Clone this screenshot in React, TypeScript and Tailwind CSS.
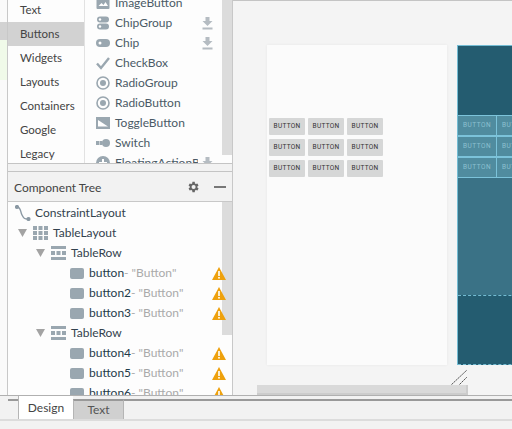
const uiFont = "font-['Lato','Noto_Sans',sans-serif]"

const categories = ['Text', 'Buttons', 'Widgets', 'Layouts', 'Containers', 'Google', 'Legacy']

function Download() {
    return (
        <svg width="11" height="13" viewBox="0 0 11 13" fill="#b5bcc2">
            <path d="M3.500 0h4v4h3l-5 5-5-5h3z" />
            <rect x="0.5" y="10.5" width="10" height="2" />
        </svg>
    )
}

function PaletteIcon({ name }: { name: string }) {
    const c = '#9aa7b0'
    if (name === 'ImageButton') return (
        <svg width="14" height="14" viewBox="0 0 14 14">
            <rect x="0.5" y="1" width="13" height="12" rx="1" fill={c} />
            <path d="M2.500 10l3-3 2 2 2-3 2.500 4z" fill="#fff" />
        </svg>
    )
    if (name === 'ChipGroup') return (
        <svg width="14" height="14" viewBox="0 0 14 14" fill={c}>
            <rect x="1" y="0.5" width="12" height="6" rx="3" />
            <rect x="1" y="7.5" width="12" height="6" rx="3" />
            <circle cx="4" cy="3.5" r="1.2" fill="#fff" />
            <circle cx="4" cy="10.5" r="1.2" fill="#fff" />
        </svg>
    )
    if (name === 'Chip') return (
        <svg width="14" height="14" viewBox="0 0 14 14" fill={c}>
            <rect x="0" y="3" width="14" height="8" rx="4" />
            <circle cx="4" cy="7" r="1.5" fill="#fff" />
        </svg>
    )
    if (name === 'CheckBox') return (
        <svg width="14" height="14" viewBox="0 0 14 14" fill="none" stroke={c} strokeWidth="2.4">
            <path d="M1 7.500l4 4.500 8-10" />
        </svg>
    )
    if (name === 'RadioGroup' || name === 'RadioButton') return (
        <svg width="14" height="14" viewBox="0 0 14 14">
            <circle cx="7" cy="7" r="6" fill="none" stroke={c} strokeWidth="1.6" />
            <circle cx="7" cy="7" r="3" fill={c} />
        </svg>
    )
    if (name === 'ToggleButton') return (
        <svg width="14" height="12" viewBox="0 0 14 12">
            <rect width="14" height="12" fill={c} />
            <path d="M2 3l10 6.500H2z" fill="#fff" />
        </svg>
    )
    if (name === 'Switch') return (
        <svg width="14" height="10" viewBox="0 0 14 10" fill={c}>
            <rect x="0" y="3" width="3" height="4" />
            <rect x="3.5" y="3" width="3" height="4" />
            <circle cx="10" cy="5" r="4" />
        </svg>
    )
    return (
        <svg width="14" height="14" viewBox="0 0 14 14">
            <circle cx="7" cy="7" r="7" fill={c} />
            <path d="M6 3h2v3h3v2H8v3H6V8H3V6h3z" fill="#fff" />
        </svg>
    )
}

const paletteItems = [
    { name: 'ImageButton', dl: false },
    { name: 'ChipGroup', dl: true },
    { name: 'Chip', dl: true },
    { name: 'CheckBox', dl: false },
    { name: 'RadioGroup', dl: false },
    { name: 'RadioButton', dl: false },
    { name: 'ToggleButton', dl: false },
    { name: 'Switch', dl: false },
    { name: 'FloatingActionB', dl: true },
]

function Arrow() {
    return (
        <svg width="9" height="8" viewBox="0 0 9 8" fill="#a3a3a3">
            <path d="M0 0h9L4.500 8z" />
        </svg>
    )
}

function TableLayoutIcon() {
    return (
        <svg width="15" height="14" viewBox="0 0 15 14" fill="#9aa7b0">
            {[0, 5, 10].map(y => [0, 5.5, 11].map(x => <rect key={`${x}-${y}`} x={x} y={y} width="4" height="4" />))}
        </svg>
    )
}

function TableRowIcon() {
    return (
        <svg width="15" height="14" viewBox="0 0 15 14" fill="#9aa7b0">
            <rect x="0" y="0" width="15" height="3" />
            <rect x="0" y="11" width="15" height="3" />
            <rect x="0" y="5" width="4" height="4" />
            <rect x="5.5" y="5" width="4" height="4" />
            <rect x="11" y="5" width="4" height="4" />
        </svg>
    )
}

function Warning() {
    return (
        <svg width="14" height="13" viewBox="0 0 14 13">
            <path d="M7 0l7 13H0z" fill="#eea10d" />
            <rect x="6.2" y="4" width="1.6" height="5" fill="#fff" />
            <rect x="6.2" y="10" width="1.6" height="1.6" fill="#fff" />
        </svg>
    )
}

function ButtonRow({ id }: { id: string }) {
    return (
        <div className="h-[20px] flex items-center pl-[62px] pr-[6px] shrink-0">
            <div className="w-[14px] h-[11px] rounded-[2px] bg-[#9aa7b0] mr-[5px]" />
            <span className="text-[#1f3b4a] text-[12px] leading-none">{id}</span>
            <span className="text-[#aaaaaa] text-[12px] leading-none whitespace-pre">- "Button"</span>
            <div className="ml-auto flex"><Warning /></div>
        </div>
    )
}

function TableRowNode() {
    return (
        <div className="h-[20px] flex items-center pl-[28px] shrink-0">
            <Arrow />
            <div className="ml-[6px] mr-[5px] flex"><TableRowIcon /></div>
            <span className="text-[#33424d] text-[12px] leading-none">TableRow</span>
        </div>
    )
}

function Palette() {
    return (
        <div className="h-[164px] flex bg-[#fdfdfd] border-b border-[#c4c4c4] overflow-hidden">
            <div className="w-[76px] shrink-0 flex flex-col -mt-[2px]">
                {categories.map(c => (
                    <div key={c} className={`h-[24px] shrink-0 flex items-center pl-[12px] text-[11.5px] text-[#444] ${c === 'Buttons' ? 'bg-[#d2d2d2]' : ''}`}>{c}</div>
                ))}
            </div>
            <div className="w-[1px] bg-[#e2e2e2] shrink-0" />
            <div className="flex-1 flex flex-col -mt-[7px] min-w-0 pr-[9px]">
                {paletteItems.map(item => (
                    <div key={item.name} className="h-[20px] shrink-0 flex items-center pl-[11px]">
                        <div className="w-[14px] flex justify-center mr-[5px]"><PaletteIcon name={item.name} /></div>
                        <span className={`text-[12px] text-[#4a5a66] leading-none whitespace-nowrap w-[84px] ${item.name === 'FloatingActionB' ? 'overflow-hidden' : ''}`}>{item.name}</span>
                        {item.dl && <div className="ml-[4px] flex"><Download /></div>}
                    </div>
                ))}
            </div>
            <div className="w-[10px] h-[155px] bg-[#dcdcdc] shrink-0" />
        </div>
    )
}

function ComponentTree() {
    return (
        <div className="flex-1 relative flex flex-col pt-[1px] min-h-0 bg-[#fdfdfd] overflow-hidden">
            <div className="absolute right-0 top-0 w-[10px] h-[133px] bg-[#dcdcdc]" />
            <div className="relative flex flex-col">
                <div className="h-[20px] flex items-center pl-[7px] shrink-0">
                    <svg width="16" height="16" viewBox="0 0 16 16" fill="none" stroke="#8a98a3" strokeWidth="1.4">
                        <path d="M2 2c4 0 3 4 5 8s3 4 6 4" />
                        <circle cx="2" cy="2" r="1.4" fill="#8a98a3" />
                        <circle cx="13.5" cy="14" r="1.4" fill="#8a98a3" />
                    </svg>
                    <span className="ml-[4px] text-[#33424d] text-[12px] leading-none">ConstraintLayout</span>
                </div>
                <div className="h-[20px] flex items-center pl-[10px] shrink-0">
                    <Arrow />
                    <div className="ml-[6px] mr-[5px] flex"><TableLayoutIcon /></div>
                    <span className="text-[#33424d] text-[12px] leading-none">TableLayout</span>
                </div>
                <TableRowNode />
                <ButtonRow id="button" />
                <ButtonRow id="button2" />
                <ButtonRow id="button3" />
                <TableRowNode />
                <ButtonRow id="button4" />
                <ButtonRow id="button5" />
                <ButtonRow id="button6" />
            </div>
        </div>
    )
}

function PreviewButton({ label }: { label: string }) {
    return (
        <div className="h-[17px] w-[36px] rounded-[1px] bg-[#d6d7d7] flex items-center justify-center text-[6.5px] text-[#333] font-['Roboto',sans-serif] tracking-[0.3px]">
            {label}
        </div>
    )
}

function BlueCell() {
    return (
        <div className="w-[39px] shrink-0 border-r border-[#7cc3da] flex items-center justify-center text-[6.5px] text-[#8cc0d0] font-['Roboto',sans-serif] tracking-[0.5px]">
            BUTTON
        </div>
    )
}

function Canvas() {
    return (
        <div className="flex-1 relative bg-[#f4f4f4] border-t border-[#c4c4c4] overflow-hidden min-w-0">
            <div className="flex pl-[34px] pt-[44px] gap-[10px] w-[400px]">
                <div className="w-[180px] h-[320px] shrink-0 bg-[#fbfbfb] shadow-[0_0_3px_rgba(0,0,0,0.06)] pt-[73px] pl-[2px] flex flex-col gap-[4px]">
                    {[0, 1, 2].map(r => (
                        <div key={r} className="flex gap-[3px]">
                            <PreviewButton label="BUTTON" />
                            <PreviewButton label="BUTTON" />
                            <PreviewButton label="BUTTON" />
                        </div>
                    ))}
                </div>
                <div className="w-[120px] h-[320px] shrink-0 flex flex-col border-l border-[#74bcd3]">
                    <div className="h-[70px] bg-[#245c70] border-t border-[#74bcd3]" />
                    <div className="h-[63px] bg-[#508c9f] flex flex-col">
                        {[0, 1, 2].map(r => (
                            <div key={r} className="h-[21px] flex border-y border-[#7cc3da]">
                                <BlueCell />
                                <BlueCell />
                            </div>
                        ))}
                    </div>
                    <div className="h-[117px] bg-[#3a7286]" />
                    <div className="h-[70px] bg-[#245c70] border-t border-b border-dashed border-[#74bcd3]" />
                </div>
            </div>
            <svg className="absolute left-[217px] top-[368px]" width="20" height="18" viewBox="0 0 20 18" fill="none" stroke="#555" strokeDasharray="2 0.6">
                <path d="M0 17L17 1" />
                <path d="M8 17L17 8" />
            </svg>
            <div className="absolute left-[24px] top-[384px] w-[211px] h-[10px] bg-[#d9d9d9] border-b-2 border-r-2 border-[#cccccc]" />
        </div>
    )
}

function TabBar() {
    return (
        <div className="h-[34px] shrink-0 flex flex-col bg-[#f2f2f2]">
            <div className="h-[24px] flex border-t border-[#b0b0b0] pl-[8px]">
                <div className="w-[10px] mt-[3px] border-t-[2px] border-t-[#999]" />
                <div className="w-[55px] bg-white flex items-center justify-center text-[12px] text-[#444] border-l border-[#b5b5b5]">Design</div>
                <div className="w-[51px] mt-[3px] bg-[#d0d0d0] flex items-center justify-center text-[12px] text-[#555] border-x border-[#b5b5b5] border-t-[2px] border-t-[#999]">Text</div>
                <div className="flex-1 mt-[3px] border-t-[2px] border-t-[#999]" />
            </div>
            <div className="h-[2px] bg-[#dcdcdc]" />
        </div>
    )
}

export default function App() {
    return (
        <div className={`w-[512px] h-[429px] flex flex-col overflow-hidden bg-white ${uiFont}`}>
            <div className="h-[395px] flex shrink-0">
                <div className="w-[7px] shrink-0 flex flex-col bg-[#fafafa]">
                    <div className="h-[22px]" />
                    <div className="h-[18px] bg-[#d2d2d2]" />
                    <div className="h-[40px] bg-[#f0fae9]" />
                </div>
                <div className="w-[226px] shrink-0 flex flex-col border-x border-[#c8c8c8]">
                    <Palette />
                    <div className="h-[8px] bg-[#f2f2f2] border-b border-[#c4c4c4] shrink-0" />
                    <div className="h-[30px] shrink-0 bg-[#f2f2f2] border-b border-[#c8c8c8] flex items-center pl-[6px] pr-[6px]">
                        <span className="text-[12px] text-[#444] mt-[2px]">Component Tree</span>
                        <svg className="ml-auto mr-[14px]" width="14" height="14" viewBox="0 0 24 24" fill="#666">
                            <path d="M19.400 13a7.500 7.500 0 0 0 0-2l2.100-1.600-2-3.500-2.500 1a7.500 7.500 0 0 0-1.700-1L15 3.200h-4l-.4 2.700a7.500 7.500 0 0 0-1.700 1l-2.500-1-2 3.500L6.500 11a7.500 7.500 0 0 0 0 2l-2.100 1.600 2 3.500 2.500-1a7.500 7.500 0 0 0 1.700 1l.4 2.700h4l.4-2.700a7.500 7.500 0 0 0 1.700-1l2.500 1 2-3.500zM13 15.500a3.500 3.500 0 1 1 0-7 3.500 3.500 0 0 1 0 7z" />
                        </svg>
                        <div className="w-[12px] h-[2px] bg-[#777]" />
                    </div>
                    <ComponentTree />
                </div>
                <Canvas />
            </div>
            <TabBar />
        </div>
    )
}
